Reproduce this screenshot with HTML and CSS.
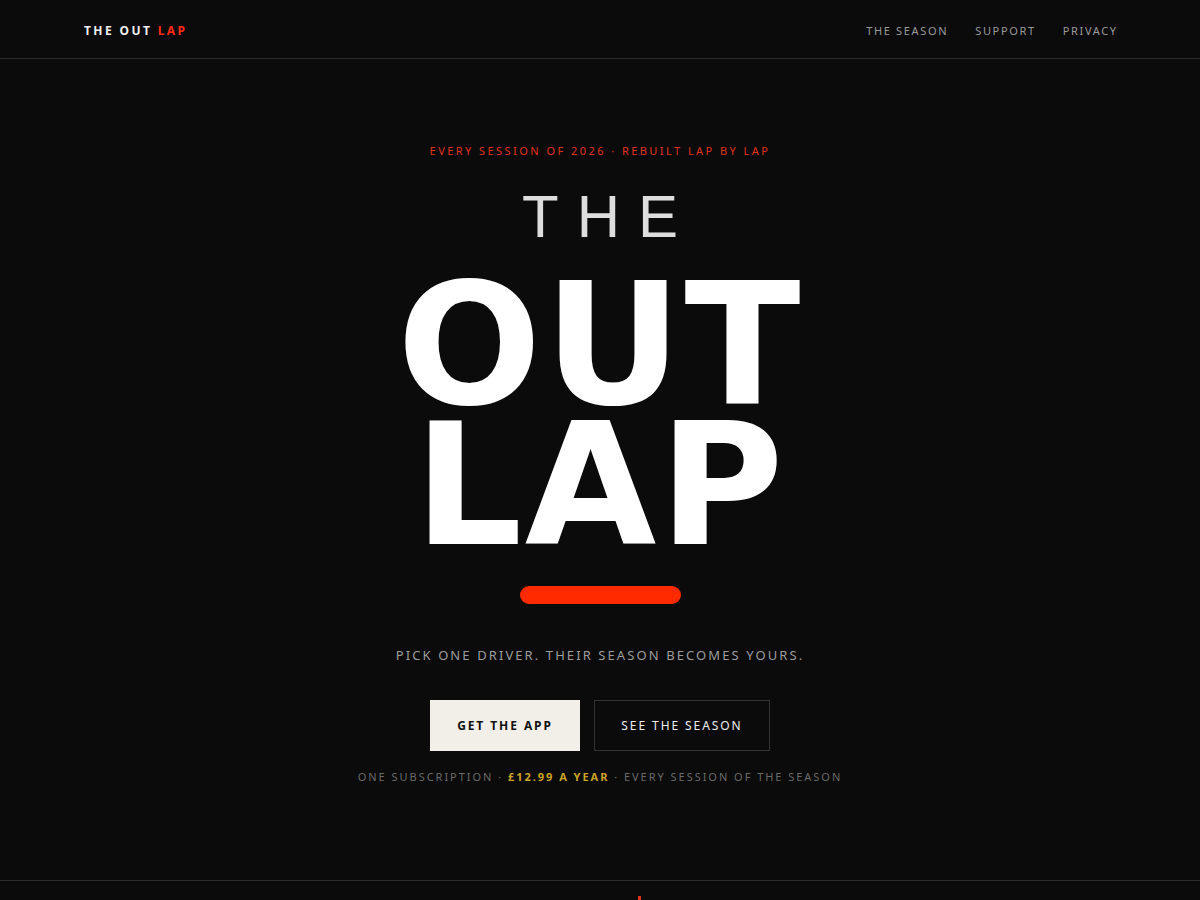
FILE: index.html
```html
<!DOCTYPE html>
<html lang="en">
<head>
<meta charset="utf-8">
<title>The Out Lap</title>
<link rel="stylesheet" href="styles.css">
</head>
<body>
<header class="site-header">
  <a class="logo" href="#">THE OUT <span class="logo-accent">LAP</span></a>
  <nav class="nav">
    <a href="#">THE SEASON</a>
    <a href="#">SUPPORT</a>
    <a href="#">PRIVACY</a>
  </nav>
</header>
<main class="hero">
  <p class="eyebrow">EVERY SESSION OF 2026 · REBUILT LAP BY LAP</p>
  <h1 class="title">
    <span class="title-the">THE</span>
    <span class="title-big">OUT<br>LAP</span>
  </h1>
  <div class="red-bar"></div>
  <p class="tagline">PICK ONE DRIVER. THEIR SEASON BECOMES YOURS.</p>
  <div class="actions">
    <a class="btn btn-primary" href="#">GET THE APP</a>
    <a class="btn btn-ghost" href="#">SEE THE SEASON</a>
  </div>
  <p class="fine">ONE SUBSCRIPTION · <strong class="price">£12.99 A YEAR</strong> · EVERY SESSION OF THE SEASON</p>
</main>
<footer class="site-footer">
  <span class="footer-mark"></span>
</footer>
</body>
</html>
```
FILE: styles.css
```css
* { box-sizing: border-box; }
html, body { margin: 0; padding: 0; }
body {
  background: #0b0b0b;
  color: #eee;
  font-family: "Noto Sans", "Open Sans", sans-serif;
  height: 900px;
  overflow: hidden;
}
a { text-decoration: none; color: inherit; }

.site-header {
  height: 59px;
  border-bottom: 1px solid #2c2c2c;
  display: flex;
  align-items: center;
  justify-content: space-between;
  padding: 0 84px 0 84px;
}
.logo {
  font-size: 12px;
  font-weight: 700;
  letter-spacing: 0.2em;
  color: #eeeeee;
  margin-top: 3px;
}
.logo-accent { color: #ff2a14; }
.nav {
  display: flex;
  gap: 27px;
  margin-top: 3px;
}
.nav a {
  font-size: 11px;
  letter-spacing: 0.15em;
  color: #9a9a9a;
}
.nav a:last-child { margin-right: -1.65px; }

.hero {
  height: 821px;
  display: flex;
  flex-direction: column;
  align-items: center;
  padding-top: 84px;
  text-align: center;
}
.eyebrow {
  margin: 0;
  font-size: 11px;
  letter-spacing: 2.45px;
  color: #e0321d;
  line-height: 16px;
}
.title {
  margin: 28px 0 0 0;
  display: flex;
  flex-direction: column;
  align-items: center;
  font-weight: normal;
}
.title-the {
  font-family: "Liberation Sans", Arial, sans-serif;
  font-size: 60px;
  font-weight: 400;
  letter-spacing: 0.3em;
  padding-left: 0.3em;
  color: #dddddd;
  line-height: 60px;
}
.title-big {
  font-family: "DejaVu Sans", sans-serif;
  font-size: 170px;
  font-weight: 700;
  line-height: 140px;
  letter-spacing: 2.5px;
  color: #ffffff;
  margin-top: 28px;
}
.red-bar {
  width: 161px;
  height: 18px;
  border-radius: 9px;
  background: #ff2a00;
  margin-top: 31px;
}
.tagline {
  margin: 42px 0 0 0;
  font-size: 13px;
  letter-spacing: 2.09px;
  color: #9c9c9c;
  line-height: 18px;
}
.actions {
  display: flex;
  gap: 14px;
  margin-top: 36px;
}
.btn {
  height: 51px;
  display: flex;
  align-items: center;
  justify-content: center;
  font-size: 12px;
  letter-spacing: 0.16em;
}
.btn-primary {
  width: 150px;
  background: #f2efe9;
  color: #111;
  font-weight: 700;
}
.btn-ghost {
  width: 176px;
  border: 1px solid #333;
  color: #eeeeee;
}
.fine {
  margin: 18px 0 0 0;
  font-size: 11px;
  letter-spacing: 1.97px;
  color: #6a6a6a;
  line-height: 16px;
}
.price {
  color: #c9a227;
  font-weight: 700;
}

.site-footer {
  border-top: 1px solid #2c2c2c;
  height: 20px;
  display: flex;
  justify-content: center;
  padding-top: 15px;
}
.footer-mark {
  width: 3px;
  height: 5px;
  background: #e0321d;
  margin-left: 78px;
}
```
